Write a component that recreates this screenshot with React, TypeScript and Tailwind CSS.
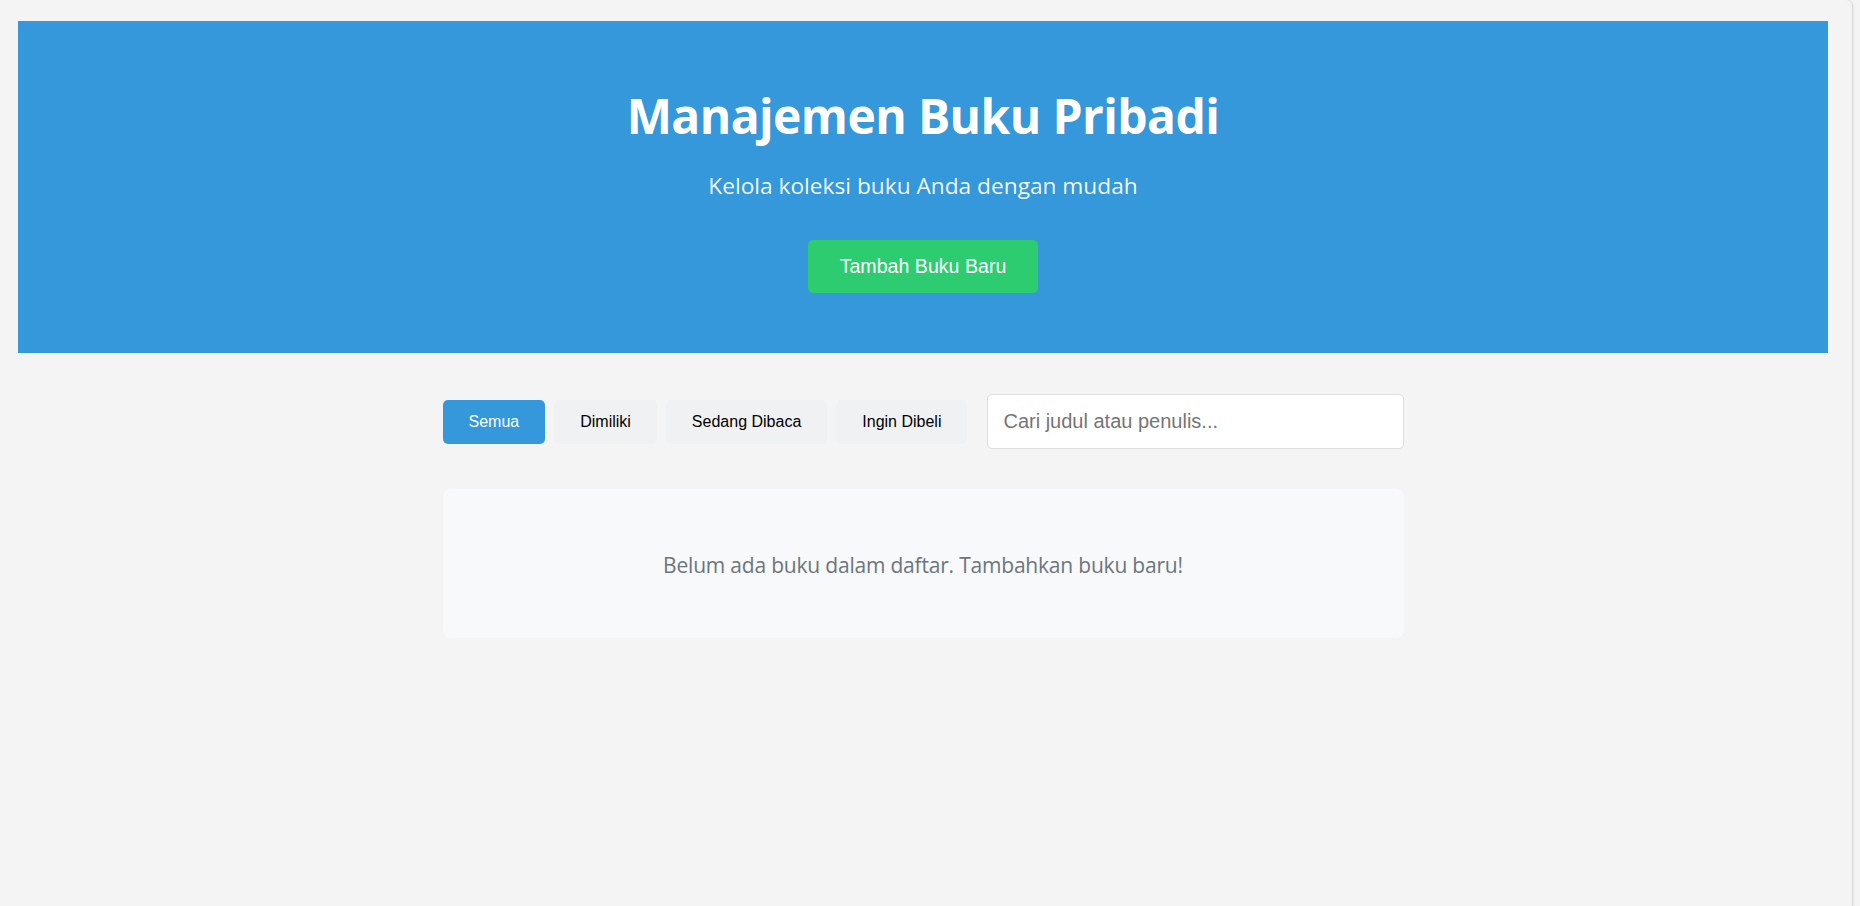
import React, { useState } from 'react';

const filters = ['Semua', 'Dimiliki', 'Sedang Dibaca', 'Ingin Dibeli'];

const App: React.FC = () => {
  const [active, setActive] = useState('Semua');
  const [query, setQuery] = useState('');

  return (
    <div className="min-h-[906px] bg-[#f4f4f4] flex">
      <div className="w-[1853px] min-h-[906px] border-r border-[#d9d9d9] rounded-tr-md shadow-[1px_0_2px_rgba(0,0,0,0.06)] pt-[21px] pl-[18px] pr-[24px]">
        {/* Header */}
        <header className="bg-[#3498db] h-[332px] flex flex-col items-center text-white font-['Open_Sans',sans-serif]">
          <h1 className="mt-[63px] text-[48px] leading-[64px] font-bold tracking-[-0.6px]">Manajemen Buku Pribadi</h1>
          <p className="mt-[22px] text-[22.7px] leading-[32px] text-white/95">Kelola koleksi buku Anda dengan mudah</p>
          <button className="mt-[38px] w-[230px] h-[53px] rounded-[5px] bg-[#2ecc71] text-white text-[19.6px] font-['Liberation_Sans',Arial,sans-serif]">
            Tambah Buku Baru
          </button>
        </header>

        {/* Filters */}
        <div className="max-w-[961px] mx-auto mt-[41px] flex items-center gap-[9px] font-['Liberation_Sans',Arial,sans-serif]">
          {filters.map((f) => (
            <button
              key={f}
              onClick={() => setActive(f)}
              className={`h-[44px] px-[26px] rounded-[5px] text-[16px] ${active === f ? 'bg-[#3498db] text-white' : 'bg-[#f0f1f3] text-black'}`}
            >
              {f}
            </button>
          ))}
          <input
            value={query}
            onChange={(e) => setQuery(e.target.value)}
            placeholder="Cari judul atau penulis..."
            className="ml-[11px] flex-1 h-[55px] px-[15px] bg-white border border-[#dddddd] rounded-[5px] text-[20px] outline-none placeholder:text-[#757575]"
          />
        </div>

        {/* Book list */}
        <div className="max-w-[961px] mx-auto mt-[40px] bg-[#f8f9fa] rounded-lg h-[149px] flex items-center justify-center">
          <p className="mt-[4px] text-[21px] text-[#6c757d] font-['Open_Sans',sans-serif] tracking-[-0.2px]">
            Belum ada buku dalam daftar. Tambahkan buku baru!
          </p>
        </div>
      </div>
    </div>
  );
};

export default App;
